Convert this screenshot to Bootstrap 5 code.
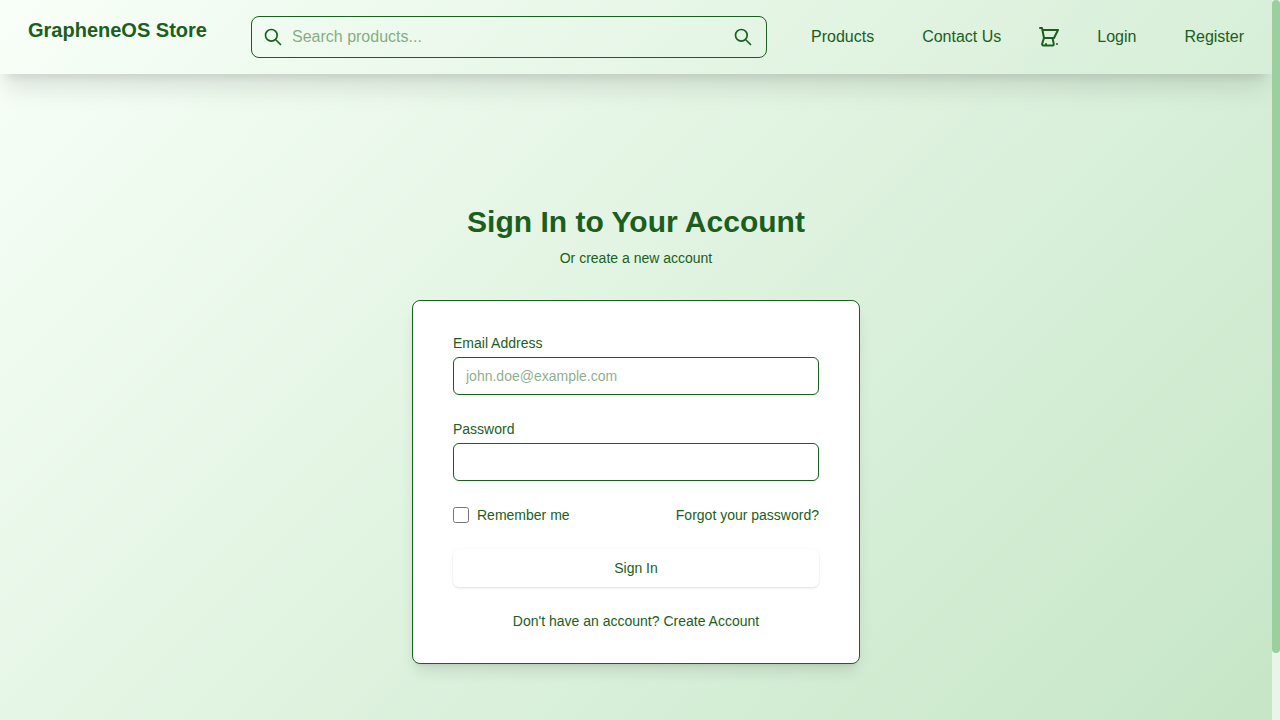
<!DOCTYPE html>
<html lang="en">
<head>
<meta charset="utf-8">
<meta name="viewport" content="width=device-width, initial-scale=1">
<title>GrapheneOS Store</title>
<link href="https://cdn.jsdelivr.net/npm/bootstrap@5.3.0/dist/css/bootstrap.min.css" rel="stylesheet">
<style>
:root{--green:#1b5e20}
body{font-family:"Liberation Sans",Arial,sans-serif;color:var(--green);height:100vh;overflow:hidden;background:#e8f5e9}
a{color:var(--green);text-decoration:none}
.page-area{background:linear-gradient(135deg,#f8fff8 0%,#c6e6c7 100%)}
.site-header{height:74px;padding:16px 28px;box-shadow:0 20px 25px -5px rgba(0,0,0,.1),0 8px 10px -6px rgba(0,0,0,.1)}
.site-brand{font-size:20px;line-height:28px;font-weight:700;width:223px}
.search-box{width:516px;height:42px;border:1px solid var(--green);border-radius:8px;padding:0 13px 0 11px}
.search-box input{font-size:16px;padding:0 0 0 9px;color:var(--green)}
.search-box input::placeholder,.field::placeholder{color:var(--green);opacity:.5}
.line-icon{fill:none;stroke:var(--green);stroke-width:2;stroke-linecap:round;stroke-linejoin:round}
.site-links{font-size:16px;line-height:24px;height:42px;padding-left:44px}
.cart-link{margin:0 36px}
.site-links .text-link + .text-link{margin-left:48px}
.signin{width:448px;margin-top:126px}
.signin h1{font-size:30px;line-height:36px;font-weight:700;margin:4px 0 8px}
.small-copy{font-size:14px;line-height:20px}
.signin-card{margin-top:32px;height:364px;border:1px solid var(--green);border-radius:8px;padding:32px 40px;box-shadow:0 10px 15px -3px rgba(0,0,0,.1),0 4px 6px -4px rgba(0,0,0,.1)}
.signin-card label{display:block}
.field{height:38px;margin-top:4px;padding:8px 12px;font-size:14px;line-height:20px;border:1px solid var(--green);border-radius:6px;box-shadow:0 1px 2px rgba(0,0,0,.05)}
.remember{width:16px;height:16px;margin:0 8px 0 0}
.submit-btn{height:38px;border:0;border-radius:6px;color:var(--green);font-size:14px;background:#fff;box-shadow:0 1px 3px rgba(0,0,0,.1),0 1px 2px -1px rgba(0,0,0,.1)}
.scroll-track{width:8px;background:#e8f5e9;border-radius:4px}
.scroll-thumb{height:653px;background:#9ccf9e;border-radius:4px}
</style>
</head>
<body class="d-flex">
<div class="page-area flex-grow-1 vh-100 d-flex flex-column align-items-center">
  <header class="site-header w-100 d-flex align-items-start">
    <a href="#" class="site-brand">GrapheneOS Store</a>
    <form class="search-box d-flex align-items-center">
      <svg class="line-icon" width="20" height="20" viewBox="0 0 24 24"><path d="M21 21l-6-6m2-5a7 7 0 11-14 0 7 7 0 0114 0z"/></svg>
      <input class="border-0 bg-transparent flex-grow-1" type="text" placeholder="Search products...">
      <svg class="line-icon" width="20" height="20" viewBox="0 0 24 24"><path d="M21 21l-6-6m2-5a7 7 0 11-14 0 7 7 0 0114 0z"/></svg>
    </form>
    <nav class="site-links d-flex align-items-center">
      <a href="#" class="text-link">Products</a>
      <a href="#" class="text-link">Contact Us</a>
      <a href="#" class="cart-link d-flex"><svg class="line-icon" width="24" height="24" viewBox="0 0 24 24"><path d="M3 3h2l.4 2M7 13h10l4-8H5.4M7 13L5.4 5M7 13L5.2 18.6Q4.9 20.5 6.4 20.5H15.6Q17 20.5 16.7 18.6L15.5 13M9 19v.1M20 19v.1"/></svg></a>
      <a href="#" class="text-link">Login</a>
      <a href="#" class="text-link">Register</a>
    </nav>
  </header>
  <main class="signin">
    <h1 class="text-center">Sign In to Your Account</h1>
    <p class="small-copy text-center mb-0">Or <a href="#">create a new account</a></p>
    <form class="signin-card small-copy bg-white">
      <label for="email">Email Address</label>
      <input id="email" class="field w-100 d-block" type="email" placeholder="john.doe@example.com">
      <label for="password" class="mt-4">Password</label>
      <input id="password" class="field w-100 d-block" type="password">
      <div class="d-flex align-items-center mt-4">
        <input id="remember" class="remember" type="checkbox"><label for="remember">Remember me</label>
        <a href="#" class="ms-auto">Forgot your password?</a>
      </div>
      <button class="submit-btn w-100 mt-4" type="button">Sign In</button>
      <p class="text-center mt-4 mb-0">Don't have an account? <a href="#">Create Account</a></p>
    </form>
  </main>
</div>
<div class="scroll-track vh-100 flex-shrink-0"><div class="scroll-thumb"></div></div>
<script src="https://cdn.jsdelivr.net/npm/bootstrap@5.3.0/dist/js/bootstrap.bundle.min.js"></script>
</body>
</html>
